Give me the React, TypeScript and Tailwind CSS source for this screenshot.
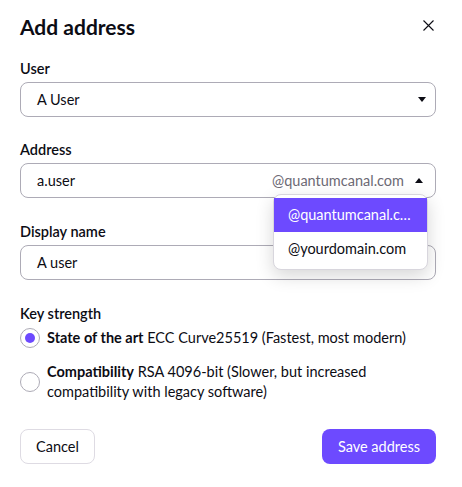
import { useState } from "react";

const font = { fontFamily: "Lato, 'Noto Sans', sans-serif" };

function Caret({ up }: { up?: boolean }) {
  return (
    <svg width="8" height="5" viewBox="0 0 8 5" className={up ? "rotate-180" : ""}>
      <path d="M0 0h8L4 5z" fill="#0c0c14" />
    </svg>
  );
}

function Label({ children }: { children: React.ReactNode }) {
  return <p className="text-[14.5px] font-semibold leading-5 text-[#0c0c14]">{children}</p>;
}

function Radio({ checked }: { checked: boolean }) {
  return (
    <span className="flex h-5 w-5 shrink-0 items-center justify-center rounded-full border border-[#adabb6] bg-white">
      {checked && <span className="h-[10px] w-[10px] rounded-full bg-[#6d4aff]" />}
    </span>
  );
}

export default function App() {
  const [strength, setStrength] = useState("ecc");

  return (
    <div className="min-h-screen bg-white pl-5 pr-[26px] pt-[12px] text-[#0c0c14]" style={font}>
      <div className="flex h-[29px] items-center justify-between">
        <h1 className="text-[21px] font-bold leading-7">Add address</h1>
        <button className="mr-[2px] mt-[-2px] flex items-center justify-center">
          <svg width="11" height="11" viewBox="0 0 11 11">
            <path d="M0.5 0.5l10 10M10.5 0.5l-10 10" stroke="#0c0c14" strokeWidth="1.1" />
          </svg>
        </button>
      </div>

      <div className="mt-[18px]">
        <Label>User</Label>
        <div className="mt-[3px] flex h-[35px] items-center justify-between rounded-lg border border-[#adabb6] pl-4 pr-[9px]">
          <span className="text-[14.5px]">A User</span>
          <Caret />
        </div>
      </div>

      <div className="relative mt-[23px]">
        <Label>Address</Label>
        <div className="mt-[3px] flex h-[35px] items-center rounded-lg border border-[#adabb6] pl-4 pr-[12px]">
          <span className="flex-1 text-[14.5px]">a.user</span>
          <span className="mr-[11px] text-[14.5px] text-[#6d6a75]">@quantumcanal.com</span>
          <Caret up />
        </div>
        <div className="absolute left-[253px] top-[54px] z-10 w-[155px] rounded-lg border border-[#d8d6dd] bg-white pb-[3px] pt-[3px] shadow-[0_6px_18px_rgba(0,0,0,0.16)]">
          <div className="flex h-[34px] items-center bg-[#6d4aff] px-[14px] text-[14.5px] text-white">
            <span className="truncate">@quantumcanal.com</span>
          </div>
          <div className="flex h-[34px] items-center px-[14px] text-[14.5px]">@yourdomain.com</div>
        </div>
      </div>

      <div className="mt-[24px]">
        <Label>Display name</Label>
        <div className="mt-[3px] flex h-[35px] items-center rounded-lg border border-[#adabb6] pl-4">
          <span className="text-[14.5px]">A user</span>
        </div>
      </div>

      <div className="mt-[24px]">
        <Label>Key strength</Label>
        <div className="mt-[4px] flex flex-col gap-[14px]">
          <label className="flex items-center gap-[7px]" onClick={() => setStrength("ecc")}>
            <Radio checked={strength === "ecc"} />
            <span className="text-[14.5px] leading-5">
              <b className="font-bold">State of the art</b> ECC Curve25519 (Fastest, most modern)
            </span>
          </label>
          <label className="flex items-center gap-[7px]" onClick={() => setStrength("rsa")}>
            <Radio checked={strength === "rsa"} />
            <span className="text-[14.5px] leading-5">
              <b className="font-bold">Compatibility</b> RSA 4096-bit (Slower, but increased compatibility with legacy software)
            </span>
          </label>
        </div>
      </div>

      <div className="mt-[27px] flex items-center justify-between">
        <button className="h-[35px] w-[75px] rounded-lg border border-[#dedbe3] text-[14.5px]">Cancel</button>
        <button className="h-[35px] rounded-lg bg-[#6d4aff] px-4 text-[14.5px] text-white">Save address</button>
      </div>
    </div>
  );
}
